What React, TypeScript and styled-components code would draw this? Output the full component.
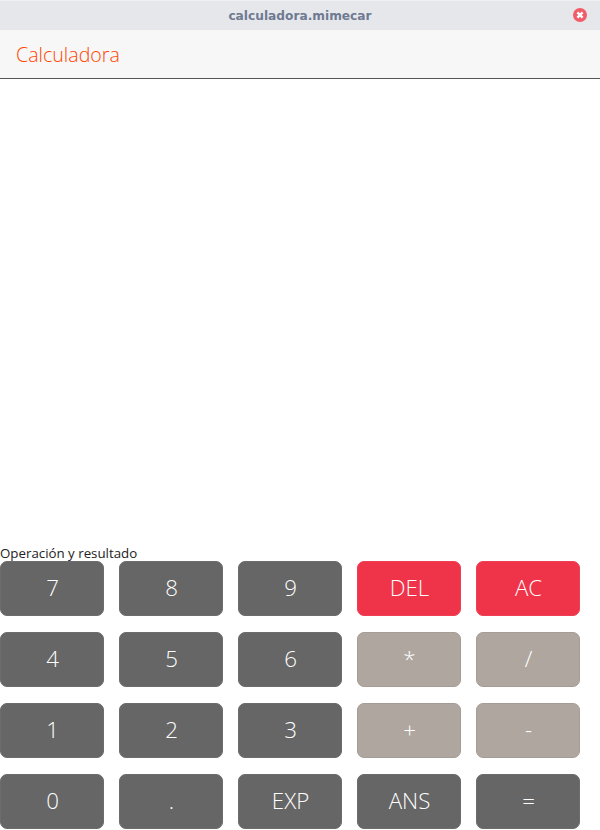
import React from "react"
import styled, { createGlobalStyle } from "styled-components"

type Variant = "dark" | "danger" | "operator"

interface Key {
  label: string
  variant?: Variant
}

const GlobalStyle = createGlobalStyle`
  html, body {
    margin: 0;
    padding: 0;
    background: #fff;
    font-family: "Open Sans", "Noto Sans", sans-serif;
  }
`

const Window = styled.div`
  display: flex;
  flex-direction: column;
  width: 600px;
  height: 830px;
  overflow: hidden;
`

const TitleBar = styled.header`
  position: relative;
  flex: none;
  display: flex;
  align-items: center;
  justify-content: center;
  height: 30px;
  background: #e6e7eb;
  border-top: 1px solid #f0f1f3;
  box-sizing: border-box;
`

const TitleText = styled.span`
  font-family: "DejaVu Sans", sans-serif;
  font-size: 12.2px;
  font-weight: 700;
  color: #6f7a92;
`

const CloseIcon = styled.svg`
  position: absolute;
  top: 7px;
  right: 13px;
  width: 14px;
  height: 14px;
`

const NavBar = styled.nav`
  flex: none;
  display: flex;
  align-items: center;
  height: 48px;
  padding-left: 16px;
  background: #f7f7f7;
  border-bottom: 1px solid #555;
`

const AppTitle = styled.h1`
  margin: 0;
  font-family: "Open Sans", sans-serif;
  font-size: 19.6px;
  font-weight: 300;
  color: #ff4500;
`

const Content = styled.main`
  flex: 1;
  display: flex;
  flex-direction: column;
  justify-content: flex-end;
  padding-bottom: 1px;
`

const OutputLabel = styled.label`
  font-family: "Open Sans", sans-serif;
  font-size: 13.3px;
  line-height: 16px;
  color: #222;
`

const Keypad = styled.div`
  display: grid;
  grid-template-columns: repeat(5, 104px);
  grid-auto-rows: 55px;
  column-gap: 15px;
  row-gap: 16px;
`

const variantColors: Record<Variant, string> = {
  dark: "#666666",
  danger: "#ef3349",
  operator: "#aea69f",
}

const KeyButton = styled.button<{ $variant: Variant }>`
  padding: 0 0 3px 1px;
  border: 1px solid ${p => (p.$variant === "operator" ? "#a59d95" : p.$variant === "danger" ? "#ef3f54" : "#6c6c6c")};
  border-radius: 7px;
  background: ${p => variantColors[p.$variant]};
  color: #fff;
  font-family: "Open Sans", sans-serif;
  font-size: 22.3px;
  font-weight: 350;
`

const keys: Key[] = [
  { label: "7" },
  { label: "8" },
  { label: "9" },
  { label: "DEL", variant: "danger" },
  { label: "AC", variant: "danger" },
  { label: "4" },
  { label: "5" },
  { label: "6" },
  { label: "*", variant: "operator" },
  { label: "/", variant: "operator" },
  { label: "1" },
  { label: "2" },
  { label: "3" },
  { label: "+", variant: "operator" },
  { label: "-", variant: "operator" },
  { label: "0" },
  { label: "." },
  { label: "EXP" },
  { label: "ANS" },
  { label: "=" },
]

const App = () => (
  <Window>
    <GlobalStyle />
    <TitleBar>
      <TitleText>calculadora.mimecar</TitleText>
      <CloseIcon viewBox="0 0 14 14">
        <circle cx="7" cy="7" r="7" fill="#f25c69" />
        <path d="M4.4 4.4l5.2 5.2M9.6 4.4l-5.2 5.2" stroke="#fff" strokeWidth="2.4" />
      </CloseIcon>
    </TitleBar>
    <NavBar>
      <AppTitle>Calculadora</AppTitle>
    </NavBar>
    <Content>
      <OutputLabel>Operación y resultado</OutputLabel>
      <Keypad>
        {keys.map(key => (
          <KeyButton key={key.label} $variant={key.variant ?? "dark"}>
            {key.label}
          </KeyButton>
        ))}
      </Keypad>
    </Content>
  </Window>
)

export default App
